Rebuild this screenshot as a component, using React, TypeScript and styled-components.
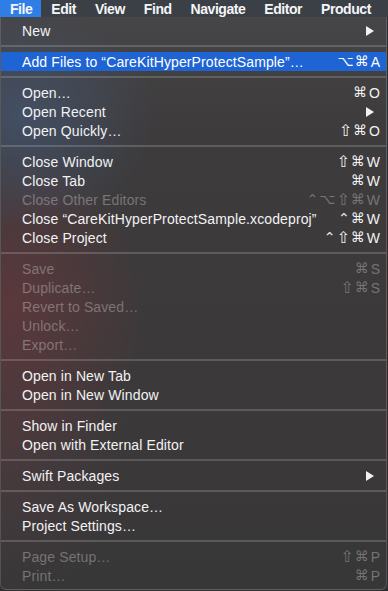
import React from "react";
import styled, { createGlobalStyle, css } from "styled-components";

const GlobalStyle = createGlobalStyle`
  html, body {
    margin: 0;
    padding: 0;
    background: #2f2f31;
  }
  body {
    font-family: "Liberation Sans", Arial, sans-serif;
    -webkit-font-smoothing: antialiased;
  }
`;

const Screen = styled.div`
  width: 388px;
  height: 591px;
  display: flex;
  flex-direction: column;
  overflow: hidden;
  background: #2f2f31;
`;

const MenuBar = styled.div`
  display: flex;
  height: 17px;
  background: #3b4047;
  flex-shrink: 0;
`;

const MenuBarItem = styled.div<{ $active?: boolean }>`
  display: flex;
  align-items: center;
  padding: 0 9px 0 10px;
  height: 17px;
  font-size: 14px;
  font-weight: 700;
  color: #f4f5f7;
  letter-spacing: -0.45px;
  ${(p) =>
    p.$active &&
    css`
      background: #2f7ee6;
    `}
`;

const Menu = styled.div`
  width: 385px;
  display: flex;
  flex-direction: column;
  padding: 4px 0 4px;
  border: 1px solid rgba(255, 255, 255, 0.14);
  border-top: none;
  border-radius: 0 0 6px 6px;
  background:
    radial-gradient(ellipse 180px 150px at 20px 100px, rgba(70, 92, 125, 0.6), transparent 75%),
    radial-gradient(ellipse 170px 210px at 10px 290px, rgba(110, 55, 60, 0.62), transparent 78%),
    radial-gradient(ellipse 160px 170px at 0px 440px, rgba(90, 60, 65, 0.42), transparent 80%),
    linear-gradient(180deg, #464547 0%, #3d3b3c 20%, #3c393a 60%, #383738 100%);
`;

const Row = styled.div<{ $disabled?: boolean; $highlight?: boolean }>`
  display: flex;
  align-items: center;
  height: 19px;
  padding: 0 6px 0 21px;
  font-size: 14px;
  letter-spacing: 0.12px;
  color: ${(p) => (p.$disabled ? "rgba(235, 232, 235, 0.34)" : "#f2f2f4")};
  ${(p) =>
    p.$highlight &&
    css`
      background: #1f64d4;
      color: #ffffff;
    `}
`;

const Label = styled.span`
  flex: 1;
  white-space: nowrap;
`;

const Shortcut = styled.span`
  display: flex;
  align-items: center;
  gap: 1px;
  white-space: nowrap;
  letter-spacing: 0;
`;

const Mod = styled.span<{ $big?: boolean }>`
  font-family: "DejaVu Sans", sans-serif;
  font-size: ${(p) => (p.$big ? "16px" : "14px")};
  line-height: 19px;
`;

const KeyChar = styled.span`
  font-size: 14px;
  margin-left: 1px;
`;

const Separator = styled.div`
  height: 12px;
  display: flex;
  align-items: center;
  &::after {
    content: "";
    flex: 1;
    height: 2px;
    background: rgba(255, 255, 255, 0.17);
  }
`;

const ArrowIcon = styled.svg`
  margin-right: 6px;
`;

const Arrow = () => (
  <ArrowIcon width="8" height="10" viewBox="0 0 8 10">
    <path d="M0 0 L8 5 L0 10 Z" fill="currentColor" />
  </ArrowIcon>
);

type Item =
  | { sep: true }
  | {
      sep?: false;
      label: string;
      key?: string;
      sub?: boolean;
      disabled?: boolean;
      highlight?: boolean;
    };

const items: Item[] = [
  { label: "New", sub: true },
  { sep: true },
  { label: "Add Files to “CareKitHyperProtectSample”…", key: "⌥⌘A", highlight: true },
  { sep: true },
  { label: "Open…", key: "⌘O" },
  { label: "Open Recent", sub: true },
  { label: "Open Quickly…", key: "⇧⌘O" },
  { sep: true },
  { label: "Close Window", key: "⇧⌘W" },
  { label: "Close Tab", key: "⌘W" },
  { label: "Close Other Editors", key: "⌃⌥⇧⌘W", disabled: true },
  { label: "Close “CareKitHyperProtectSample.xcodeproj”", key: "⌃⌘W" },
  { label: "Close Project", key: "⌃⇧⌘W" },
  { sep: true },
  { label: "Save", key: "⌘S", disabled: true },
  { label: "Duplicate…", key: "⇧⌘S", disabled: true },
  { label: "Revert to Saved…", disabled: true },
  { label: "Unlock…", disabled: true },
  { label: "Export…", disabled: true },
  { sep: true },
  { label: "Open in New Tab" },
  { label: "Open in New Window" },
  { sep: true },
  { label: "Show in Finder" },
  { label: "Open with External Editor" },
  { sep: true },
  { label: "Swift Packages", sub: true },
  { sep: true },
  { label: "Save As Workspace…" },
  { label: "Project Settings…" },
  { sep: true },
  { label: "Page Setup…", key: "⇧⌘P", disabled: true },
  { label: "Print…", key: "⌘P", disabled: true },
];

const menuBar = ["File", "Edit", "View", "Find", "Navigate", "Editor", "Product"];

const KeyCombo = ({ combo }: { combo: string }) => {
  const chars = Array.from(combo);
  const last = chars[chars.length - 1];
  const mods = chars.slice(0, -1);
  return (
    <Shortcut>
      {mods.map((m, i) => (
        <Mod key={i} $big={m === "⇧"}>
          {m}
        </Mod>
      ))}
      <KeyChar>{last}</KeyChar>
    </Shortcut>
  );
};

export default function App() {
  return (
    <Screen>
      <GlobalStyle />
      <MenuBar>
        {menuBar.map((m, i) => (
          <MenuBarItem key={m} $active={i === 0}>
            {m}
          </MenuBarItem>
        ))}
      </MenuBar>
      <Menu>
        {items.map((it, i) =>
          it.sep ? (
            <Separator key={i} />
          ) : (
            <Row key={i} $disabled={it.disabled} $highlight={it.highlight}>
              <Label>{it.label}</Label>
              {it.key && <KeyCombo combo={it.key} />}
              {it.sub && <Arrow />}
            </Row>
          )
        )}
      </Menu>
    </Screen>
  );
}
